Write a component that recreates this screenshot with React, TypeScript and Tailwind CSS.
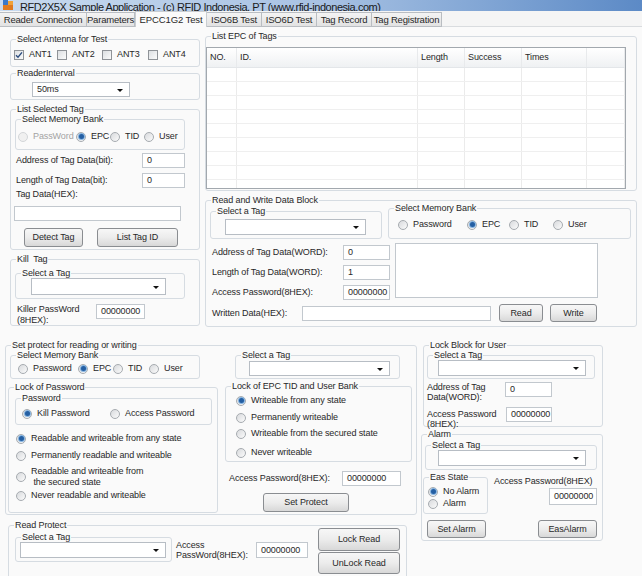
import type { ReactNode } from 'react';

// WinForms-style controls

function Group({ label, className = '', children }: { label: string; className?: string; children?: ReactNode }) {
  return (
    <fieldset className={`shrink-0 rounded-[3px] border border-[#d6dce2] ${className}`}>
      <legend className="ml-[5px] whitespace-pre px-[1px] leading-[11px]">{label}</legend>
      {children}
    </fieldset>
  );
}

function Radio({ on = false, off = false }: { on?: boolean; off?: boolean }) {
  return (
    <span
      className={`flex h-[10px] w-[10px] shrink-0 items-center justify-center rounded-full border ${
        off ? 'border-[#d3d6d9] bg-[#f0f0f0]' : 'border-[#a6abb0] bg-linear-to-br from-[#d8dadd] to-[#fbfbfb]'
      }`}
    >
      {on && <span className="h-[5px] w-[5px] rounded-full bg-[#245fa3] shadow-[0_0_0_1px_#86b4e0]" />}
    </span>
  );
}

function Opt({ on, off, className = '', children }: { on?: boolean; off?: boolean; className?: string; children: ReactNode }) {
  return (
    <span className={`flex shrink-0 items-center ${className}`}>
      <Radio on={on} off={off} />
      <span className={`ml-[5px] whitespace-nowrap ${off ? 'text-[#a3a3a3]' : ''}`}>{children}</span>
    </span>
  );
}

function Check({ on = false }: { on?: boolean }) {
  return (
    <span className="flex h-[10px] w-[10px] shrink-0 items-center justify-center border border-[#8f9398] bg-linear-to-br from-[#dcdfe2] to-[#fbfbfb]">
      {on && (
        <svg width="8" height="8" viewBox="0 0 8 8">
          <path d="M1 4.2 L3 6.2 L7 1.4" fill="none" stroke="#2b4c7e" strokeWidth="1.4" />
        </svg>
      )}
    </span>
  );
}

function Combo({ className = '', value = '' }: { className?: string; value?: string }) {
  return (
    <div className={`flex shrink-0 items-center justify-between border border-[#b7bdc4] bg-white pl-[4px] pr-[6px] ${className}`}>
      <span>{value}</span>
      <span className="mt-[1px] border-x-[3px] border-t-[3px] border-x-transparent border-t-[#111]" />
    </div>
  );
}

function Field({ className = '', value = '' }: { className?: string; value?: string }) {
  return (
    <div className={`flex shrink-0 items-center border border-[#c2c8ce] bg-white pl-[4px] ${className}`}>{value}</div>
  );
}

function Btn({ className = '', children }: { className?: string; children: ReactNode }) {
  return (
    <div
      className={`flex shrink-0 items-center justify-center rounded-[3px] border border-[#8a8d91] bg-linear-to-b from-[#f7f7f7] via-[#ececec] to-[#d8d8d8] ${className}`}
    >
      {children}
    </div>
  );
}

const TABS = [
  { label: 'Reader Connection', w: 'w-[87px]' },
  { label: 'Parameters', w: 'w-[48px]' },
  { label: 'EPCC1G2 Test', w: 'w-[72px]', active: true },
  { label: 'ISO6B Test', w: 'w-[55px]' },
  { label: 'ISO6D Test', w: 'w-[55px]' },
  { label: 'Tag Record', w: 'w-[55px]' },
  { label: 'Tag Registration', w: 'w-[70px]' },
];

const COLS = ['w-[30px]', 'w-[181px]', 'w-[47px]', 'w-[57px]', 'w-[65px]', 'flex-1'];
const HEADS = ['NO.', 'ID.', 'Length', 'Success', 'Times', ''];

function TagList() {
  return (
    <div className="mt-[5px] flex h-[142px] w-[420px] flex-col overflow-hidden border border-[#a2a8ae] bg-white">
      <div className="flex h-[20px] shrink-0 border-b border-[#e3e6e9] bg-linear-to-b from-white to-[#eff1f3]">
        {HEADS.map((h, i) => (
          <div key={i} className={`${COLS[i]} flex items-center border-r border-[#e8eaec] pl-[3px]`}>
            {h}
          </div>
        ))}
      </div>
      {Array.from({ length: 9 }).map((_, r) => (
        <div key={r} className="flex h-[14px] shrink-0 border-b border-[#efefef]">
          {COLS.map((c, i) => (
            <div key={i} className={`${c} border-r border-[#ebebeb]`} />
          ))}
        </div>
      ))}
    </div>
  );
}

export default function App() {
  return (
    <div className="h-[576px] w-[642px] overflow-hidden bg-[#fafafa] font-['Liberation_Sans',Arial,sans-serif] text-[9px] leading-[11px] tracking-[-0.1px] text-[#282828]">
      {/* title bar, cut at the top */}
      <div className="flex h-[11px] items-end overflow-hidden bg-linear-to-r from-[#c8daef] via-[#a8c2e3] to-[#5c8ac6]">
        <svg className="mb-[1px] ml-[3px] shrink-0" width="10" height="10" viewBox="0 0 10 10">
          <rect x="0" y="0" width="5" height="5" fill="#3a78c9" />
          <rect x="5" y="1" width="5" height="4" fill="#f0a23a" />
          <rect x="0" y="5" width="10" height="5" fill="#e07a1f" />
        </svg>
        <span className="ml-[7px] translate-y-[2px] whitespace-nowrap text-[11px] leading-[11px] tracking-[-0.45px] text-[#1a1a1a]">
          RFD2X5X Sample Application - (c) RFID Indonesia, PT (www.rfid-indonesia.com)
        </span>
      </div>

      {/* tabs */}
      <div className="flex h-[16px] items-end bg-[#f5f5f5]">
        {TABS.map((t) =>
          t.active ? (
            <div key={t.label} className={`${t.w} flex h-[16px] items-center justify-center border-x border-t border-[#c9cdd1] bg-[#fafafa] text-[9.5px]`}>
              {t.label}
            </div>
          ) : (
            <div
              key={t.label}
              className={`${t.w} flex h-[15px] items-center justify-center border-r border-t border-b border-[#b9bdc2] bg-linear-to-b from-[#f4f4f4] to-[#e2e2e2] text-[9.5px] tracking-[-0.2px]`}
            >
              {t.label}
            </div>
          ),
        )}
        <div className="h-[16px] flex-1 border-b border-[#d9dcdf]" />
      </div>

      {/* upper part */}
      <div className="flex h-[300px] items-start">
        <div className="ml-[10px] mt-[7px] flex w-[190px] flex-col">
          <Group label="Select Antenna for Test" className="h-[33px]">
            <div className="ml-[3px] mt-[4px] flex h-[11px] items-center">
              <span className="flex w-[43px] items-center">
                <Check on />
                <span className="ml-[5px]">ANT1</span>
              </span>
              <span className="flex w-[45px] items-center">
                <Check />
                <span className="ml-[5px]">ANT2</span>
              </span>
              <span className="flex w-[46px] items-center">
                <Check />
                <span className="ml-[5px]">ANT3</span>
              </span>
              <span className="flex items-center">
                <Check />
                <span className="ml-[5px]">ANT4</span>
              </span>
            </div>
          </Group>

          <Group label="ReaderInterval" className="mt-[1px] h-[32px]">
            <Combo value="50ms" className="ml-[21px] mt-[3px] h-[15px] w-[98px]" />
          </Group>

          <Group label="List Selected Tag" className="mt-[4px] h-[146px]">
            <Group label="Select Memory Bank" className="-mt-[1px] ml-[4px] h-[36px] w-[170px]">
              <div className="ml-[2px] mt-[6px] flex h-[11px] items-center">
                <Opt off className="w-[58px]">PassWord</Opt>
                <Opt on className="w-[34px]">EPC</Opt>
                <Opt className="w-[34px]">TID</Opt>
                <Opt>User</Opt>
              </div>
            </Group>
            <div className="mt-[3px] flex h-[15px] items-center">
              <span className="ml-[5px] w-[126px]">Address of Tag Data(bit):</span>
              <Field value="0" className="h-[15px] w-[43px]" />
            </div>
            <div className="mt-[5px] flex h-[15px] items-center">
              <span className="ml-[5px] w-[126px]">Length of Tag Data(bit):</span>
              <Field value="0" className="h-[15px] w-[43px]" />
            </div>
            <div className="ml-[5px] mt-[1px]">Tag Data(HEX):</div>
            <Field className="ml-[3px] mt-[6px] h-[15px] w-[167px]" />
            <div className="mt-[7px] flex">
              <Btn className="ml-[13px] h-[19px] w-[59px]">Detect Tag</Btn>
              <Btn className="ml-[14px] h-[19px] w-[81px]">List Tag ID</Btn>
            </div>
          </Group>

          <Group label="Kill  Tag" className="mt-[4px] h-[72px]">
            <Group label="Select a Tag" className="ml-[4px] mt-[3px] h-[31px] w-[170px]">
              <Combo className="-mt-[1px] ml-[15px] h-[17px] w-[135px]" />
            </Group>
            <div className="mt-[5px] flex items-start">
              <span className="ml-[6px] w-[79px]">
                Killer PassWord
                <br />
                (8HEX):
              </span>
              <Field value="00000000" className="h-[15px] w-[49px]" />
            </div>
          </Group>
        </div>

        <div className="ml-[5px] mt-[4px] flex w-[432px] flex-col">
          <Group label="List EPC of Tags" className="h-[160px]">
            <TagList />
          </Group>

          <Group label="Read and Write Data Block" className="mt-[4px] h-[132px]">
            <div className="flex items-start">
              <Group label="Select a Tag" className="ml-[4px] h-[33px] w-[172px]">
                <Combo className="ml-[14px] mt-[2px] h-[16px] w-[141px]" />
              </Group>
              <Group label="Select Memory Bank" className="-mt-[3px] ml-[6px] h-[36px] w-[243px]">
                <div className="ml-[9px] mt-[5px] flex h-[11px] items-center">
                  <Opt className="w-[69px]">Password</Opt>
                  <Opt on className="w-[42px]">EPC</Opt>
                  <Opt className="w-[44px]">TID</Opt>
                  <Opt>User</Opt>
                </div>
              </Group>
            </div>
            <div className="mt-[4px] flex items-start">
              <div className="flex w-[184px] flex-col gap-[5px] pt-[2px]">
                {[
                  ['Address of Tag Data(WORD):', '0'],
                  ['Length of Tag Data(WORD):', '1'],
                  ['Access Password(8HEX):', '00000000'],
                ].map(([l, v]) => (
                  <div key={l} className="flex h-[15px] items-center">
                    <span className="ml-[6px] w-[131px]">{l}</span>
                    <Field value={v} className="h-[15px] w-[47px]" />
                  </div>
                ))}
              </div>
              <Field className="ml-[5px] h-[55px] w-[203px]" />
            </div>
            <div className="mt-[4px] flex h-[18px] items-center">
              <span className="ml-[6px] w-[90px]">Written Data(HEX):</span>
              <Field className="h-[15px] w-[189px]" />
              <Btn className="ml-[8px] h-[18px] w-[44px]">Read</Btn>
              <Btn className="ml-[7px] h-[18px] w-[47px]">Write</Btn>
            </div>
          </Group>
        </div>
      </div>

      {/* lower part */}
      <div className="mt-[13px] flex items-start">
        <div className="ml-[5px] flex w-[412px] flex-col">
          <Group label="Set protect for reading or writing" className="h-[175px]">
            <div className="flex items-start">
              <div className="ml-[2px] flex w-[210px] flex-col">
                <Group label="Select Memory Bank" className="-mt-[1px] ml-[2px] h-[29px] w-[190px]">
                  <div className="ml-[7px] mt-[2px] flex h-[11px] items-center">
                    <Opt className="w-[60px]">Password</Opt>
                    <Opt on className="w-[35px]">EPC</Opt>
                    <Opt className="w-[36px]">TID</Opt>
                    <Opt>User</Opt>
                  </div>
                </Group>
                <Group label="Lock of Password" className="mt-[3px] h-[131px] w-[210px]">
                  <Group label="Password" className="ml-[6px] h-[32px] w-[197px]">
                    <div className="ml-[6px] mt-[4px] flex h-[11px] items-center">
                      <Opt on className="w-[88px]">Kill Password</Opt>
                      <Opt>Access Password</Opt>
                    </div>
                  </Group>
                  <div className="ml-[7px] flex flex-col">
                    <Opt on className="mt-[8px]">Readable and writeable from any state</Opt>
                    <Opt className="mt-[6px]">Permanently readable and writeable</Opt>
                    <Opt className="mt-[5px]">
                      Readable and writeable from
                      <br />
                      &nbsp;the secured state
                    </Opt>
                    <Opt className="mt-[2px]">Never readable and writeable</Opt>
                  </div>
                </Group>
              </div>

              <div className="ml-[7px] flex w-[187px] flex-col">
                <Group label="Select a Tag" className="-mt-[1px] ml-[10px] h-[29px] w-[165px]">
                  <Combo className="ml-[13px] h-[15px] w-[141px]" />
                </Group>
                <Group label="Lock of EPC TID and User Bank" className="mt-[2px] h-[81px] w-[187px]">
                  <div className="ml-[10px] flex flex-col">
                    <Opt on className="mt-[3px]">Writeable from any state</Opt>
                    <Opt className="mt-[6px]">Permanently writeable</Opt>
                    <Opt className="mt-[5px]">Writeable from the secured state</Opt>
                    <Opt className="mt-[8px]">Never writeable</Opt>
                  </div>
                </Group>
                <div className="mt-[9px] flex h-[15px] items-center">
                  <span className="ml-[4px] w-[113px]">Access Password(8HEX):</span>
                  <Field value="00000000" className="h-[15px] w-[59px]" />
                </div>
                <Btn className="ml-[38px] mt-[7px] h-[19px] w-[86px]">Set Protect</Btn>
              </div>
            </div>
          </Group>

          <Group label="Read Protect" className="ml-[3px] mt-[5px] h-[62px] w-[399px]">
            <div className="flex items-start">
              <Group label="Select a Tag" className="ml-[6px] mt-[1px] h-[30px] w-[157px]">
                <Combo className="-mt-[1px] ml-[4px] h-[16px] w-[146px]" />
              </Group>
              <span className="ml-[4px] mt-[9px] w-[80px] leading-[10px]">
                Access
                <br />
                PassWord(8HEX):
              </span>
              <Field value="00000000" className="mt-[11px] h-[16px] w-[52px]" />
              <div className="-mt-[3px] ml-[10px] flex w-[82px] flex-col">
                <Btn className="h-[23px]">Lock Read</Btn>
                <Btn className="mt-[1px] h-[22px]">UnLock Read</Btn>
              </div>
            </div>
          </Group>
        </div>

        <div className="ml-[4px] flex w-[183px] flex-col">
          <Group label="Lock Block for User" className="ml-[2px] h-[87px] w-[180px]">
            <Group label="Select a Tag" className="-mt-[1px] ml-[3px] h-[29px] w-[168px]">
              <Combo className="-mt-[1px] ml-[10px] h-[16px] w-[148px]" />
            </Group>
            <div className="mt-[3px] flex items-start">
              <span className="ml-[3px] w-[78px] leading-[10px]">
                Address of Tag
                <br />
                Data(WORD):
              </span>
              <Field value="0" className="h-[15px] w-[47px]" />
            </div>
            <div className="mt-[5px] flex items-start">
              <span className="ml-[3px] mt-[2px] w-[79px] leading-[10px]">
                Access Password
                <br />
                (8HEX):
              </span>
              <Field value="00000000" className="h-[15px] w-[46px]" />
            </div>
          </Group>

          <Group label="Alarm" className="mt-[2px] h-[112px] w-[182px]">
            <Group label="Select a Tag" className="ml-[3px] h-[30px] w-[172px]">
              <Combo className="-mt-[1px] ml-[12px] h-[16px] w-[148px]" />
            </Group>
            <div className="mt-[2px] flex items-start">
              <Group label="Eas State" className="ml-[1px] h-[42px] w-[65px]">
                <div className="ml-[4px] flex flex-col">
                  <Opt on className="mt-[3px]">No Alarm</Opt>
                  <Opt className="mt-[1px]">Alarm</Opt>
                </div>
              </Group>
              <div className="ml-[6px] flex flex-col">
                <span className="mt-[4px] whitespace-nowrap">Access Password(8HEX)</span>
                <Field value="00000000" className="ml-[55px] mt-[1px] h-[17px] w-[48px]" />
              </div>
            </div>
            <div className="mt-[6px] flex">
              <Btn className="ml-[5px] h-[18px] w-[59px]">Set Alarm</Btn>
              <Btn className="ml-[52px] h-[18px] w-[59px]">EasAlarm</Btn>
            </div>
          </Group>
        </div>
      </div>
    </div>
  );
}
